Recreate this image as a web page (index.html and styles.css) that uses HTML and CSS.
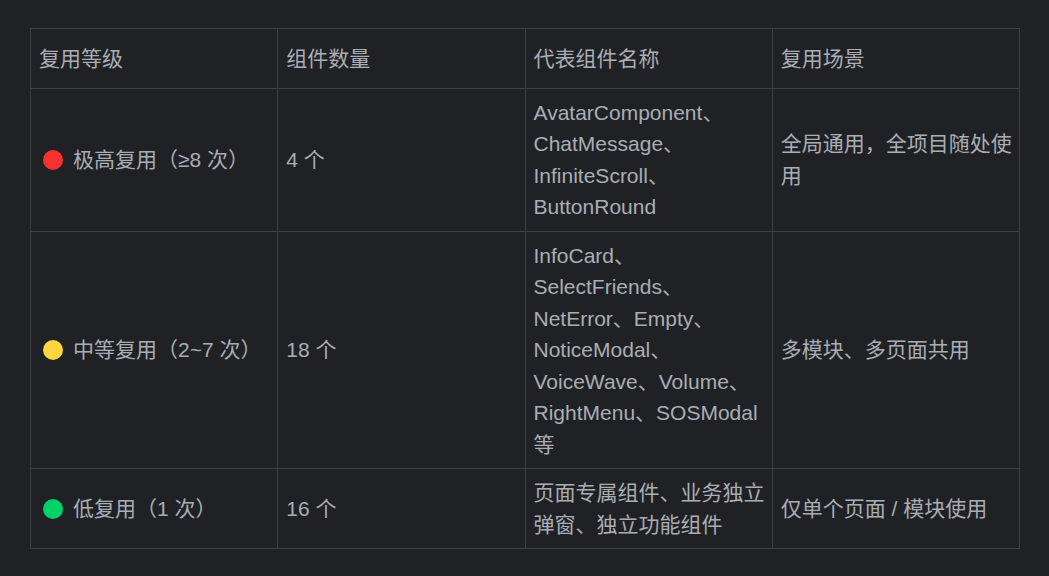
FILE: index.html
```html
<!DOCTYPE html>
<html lang="zh-CN">
<head>
<meta charset="utf-8">
<link rel="stylesheet" href="styles.css">
</head>
<body>
<table class="reuse-table">
  <thead>
    <tr>
      <th>复用等级</th>
      <th>组件数量</th>
      <th>代表组件名称</th>
      <th>复用场景</th>
    </tr>
  </thead>
  <tbody>
    <tr>
      <td><span class="dot dot-red"></span>极高复用（≥8 次）</td>
      <td>4 个</td>
      <td>AvatarComponent、ChatMessage、InfiniteScroll、ButtonRound</td>
      <td>全局通用，全项目随处使用</td>
    </tr>
    <tr>
      <td><span class="dot dot-yellow"></span>中等复用（2~7 次）</td>
      <td>18 个</td>
      <td>InfoCard、SelectFriends、NetError、Empty、NoticeModal、VoiceWave、Volume、RightMenu、SOSModal 等</td>
      <td>多模块、多页面共用</td>
    </tr>
    <tr>
      <td><span class="dot dot-green"></span>低复用（1 次）</td>
      <td>16 个</td>
      <td>页面专属组件、业务独立弹窗、独立功能组件</td>
      <td>仅单个页面 / 模块使用</td>
    </tr>
  </tbody>
</table>
</body>
</html>
```
FILE: styles.css
```css
html, body {
  margin: 0;
  background: #202124;
}
body {
  padding: 28px 30px;
  font-family: "Liberation Sans", "Noto Sans CJK SC", sans-serif;
  font-size: 21px;
  line-height: 31.5px;
  color: #a9aeb5;
}
.reuse-table {
  border-collapse: collapse;
  width: 990px;
  table-layout: fixed;
}
.reuse-table th,
.reuse-table td {
  border: 1px solid #3d3e40;
  text-align: left;
  vertical-align: middle;
  font-weight: normal;
  padding: 8px 5px 8px 8px;
}
.reuse-table th {
  padding: 13.5px 5px 13.5px 8px;
}
.dot {
  display: inline-block;
  width: 20px;
  height: 20px;
  border-radius: 50%;
  vertical-align: -3px;
  margin: 0 10px 0 4px;
}
.dot-red { background: #f8312f; }
.dot-yellow { background: #fcd53f; }
.dot-green { background: #00d26a; }
```
